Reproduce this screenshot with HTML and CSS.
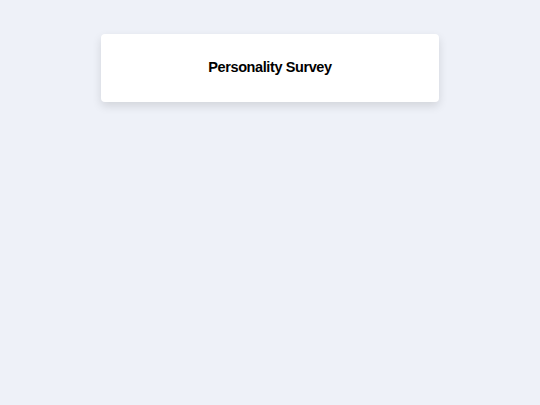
FILE: index.html
```html
<!DOCTYPE html>
<html lang="en">
<head>
    <meta charset="UTF-8">
    <meta name="viewport" content="width=device-width, initial-scale=1.0">
    <title>Personality Survey</title>
    <link rel="stylesheet" href="styles.css">
</head>
<body>
    <div class="container">
        <h1>Personality Survey</h1>
    </div>
</body>
</html>
```

FILE: styles.css
```css
body {
    font-family: "Liberation Sans", Arial, sans-serif;
    margin: 0;
    padding: 34px 0;
    background-color: #eef1f8;
}
.container {
    width: 62.5%;
    margin: 0 auto;
    background: white;
    padding: 24px 20px 26px;
    box-sizing: border-box;
    border-radius: 4px;
    box-shadow: 0 4px 10px rgba(0,0,0,0.12);
}
h1 {
    margin: 0;
    font-size: 14.5px;
    line-height: 18px;
    letter-spacing: -0.4px;
    color: #000;
    text-align: center;
}
```
